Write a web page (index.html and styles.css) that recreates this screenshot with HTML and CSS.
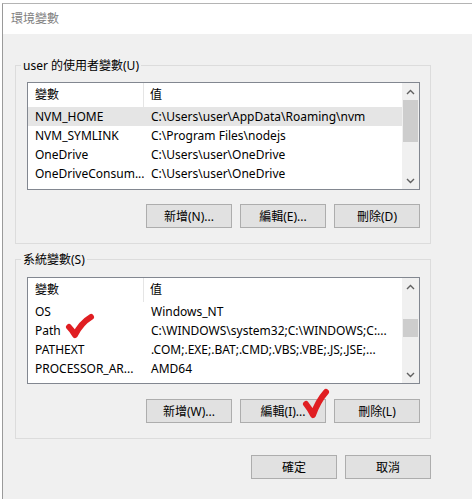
FILE: index.html
```html
<!DOCTYPE html>
<html lang="zh-Hant">
<head>
<meta charset="utf-8">
<title>環境變數</title>
<link rel="stylesheet" href="styles.css">
</head>
<body>
<div class="window">
  <div class="titlebar">環境變數</div>
  <div class="content">
    <fieldset class="group">
      <legend>user 的使用者變數(U)</legend>
      <div class="group-body">
        <div class="list">
          <div class="list-main">
            <div class="row head"><div class="c1">變數</div><div class="c2">值</div></div>
            <div class="row sel"><div class="c1">NVM_HOME</div><div class="c2">C:\Users\user\AppData\Roaming\nvm</div></div>
            <div class="row"><div class="c1">NVM_SYMLINK</div><div class="c2">C:\Program Files\nodejs</div></div>
            <div class="row"><div class="c1">OneDrive</div><div class="c2">C:\Users\user\OneDrive</div></div>
            <div class="row"><div class="c1">OneDriveConsum...</div><div class="c2">C:\Users\user\OneDrive</div></div>
          </div>
          <div class="scrollbar">
            <div class="arrow"><svg width="9" height="6" viewBox="0 0 9 6"><path d="M1 5 L4.5 1.5 L8 5" fill="none" stroke="#606060" stroke-width="1.4"/></svg></div>
            <div class="track"><div class="thumb thumb1"></div></div>
            <div class="arrow"><svg width="9" height="6" viewBox="0 0 9 6"><path d="M1 1 L4.5 4.5 L8 1" fill="none" stroke="#606060" stroke-width="1.4"/></svg></div>
          </div>
        </div>
        <div class="buttons">
          <button class="btn">新增(N)...</button>
          <button class="btn">編輯(E)...</button>
          <button class="btn">刪除(D)</button>
        </div>
      </div>
    </fieldset>

    <fieldset class="group group2">
      <legend>系統變數(S)</legend>
      <div class="group-body">
        <div class="list">
          <div class="list-main">
            <div class="row head"><div class="c1">變數</div><div class="c2">值</div></div>
            <div class="row"><div class="c1">OS</div><div class="c2">Windows_NT</div></div>
            <div class="row"><div class="c1">Path</div><div class="c2">C:\WINDOWS\system32;C:\WINDOWS;C:...</div></div>
            <div class="row"><div class="c1">PATHEXT</div><div class="c2">.COM;.EXE;.BAT;.CMD;.VBS;.VBE;.JS;.JSE;...</div></div>
            <div class="row"><div class="c1">PROCESSOR_AR...</div><div class="c2">AMD64</div></div>
          </div>
          <div class="scrollbar">
            <div class="arrow"><svg width="9" height="6" viewBox="0 0 9 6"><path d="M1 5 L4.5 1.5 L8 5" fill="none" stroke="#606060" stroke-width="1.4"/></svg></div>
            <div class="track"><div class="thumb thumb2"></div></div>
            <div class="arrow"><svg width="9" height="6" viewBox="0 0 9 6"><path d="M1 1 L4.5 4.5 L8 1" fill="none" stroke="#606060" stroke-width="1.4"/></svg></div>
          </div>
        </div>
        <div class="buttons">
          <button class="btn">新增(W)...</button>
          <button class="btn">編輯(I)...</button>
          <button class="btn">刪除(L)</button>
        </div>
      </div>
    </fieldset>

    <div class="footer">
      <button class="btn">確定</button>
      <button class="btn">取消</button>
    </div>
  </div>
</div>

<svg class="check check1" width="30" height="28" viewBox="0 0 30 28"><path d="M4 14 Q7 17 10 22 Q16 10 26 4" fill="none" stroke="#e01e22" stroke-width="6" stroke-linecap="round" stroke-linejoin="round"/></svg>
<svg class="check check2" width="30" height="32" viewBox="0 0 30 32"><path d="M5 17 Q9 22 12 28 Q17 14 25 5" fill="none" stroke="#e01e22" stroke-width="6" stroke-linecap="round" stroke-linejoin="round"/></svg>
</body>
</html>
```

FILE: styles.css
```css
* { box-sizing: border-box; }

html, body {
  margin: 0;
  padding: 0;
  background: #ffffff;
  width: 472px;
  height: 499px;
  overflow: hidden;
}

body {
  position: relative;
  font-family: "Noto Sans", "Noto Sans CJK TC", sans-serif;
  font-size: 12px;
  color: #000;
}

.window {
  margin: 3px 0 0 2px;
  width: 470px;
  height: 496px;
  border-left: 1px solid #9a9a9a;
  border-top: 1px solid #b4b4b4;
  background: #f0f0f0;
  overflow: hidden;
}

.titlebar {
  height: 30px;
  background: #ffffff;
  color: #808080;
  font-size: 12px;
  line-height: 30px;
  padding-left: 8px;
}

.content {
  padding: 22px 0 0 12px;
  width: 428px;
}

.group {
  margin: 0;
  padding: 0;
  border: 1px solid #dcdcdc;
  width: 416px;
  min-width: 0;
}

.group legend {
  padding: 2px 2px 0;
  margin-left: 5px;
  line-height: 16px;
  font-size: 12px;
}

.group-body {
  padding: 8px 10px 15px 11px;
}

.group2 {
  margin-top: 6px;
}

.group2 .group-body {
  padding-top: 9px;
}

.list {
  display: flex;
  height: 108px;
  border: 1px solid #828790;
  background: #ffffff;
}

.group2 .list {
  height: 107px;
}

.list-main {
  flex: 1;
  overflow: hidden;
}

.row {
  display: flex;
  height: 19px;
  line-height: 19px;
  white-space: nowrap;
}

.row.head {
  height: 24px;
  line-height: 23px;
}

.row.sel {
  background: #e5e5e5;
}

.c1 {
  width: 116px;
  flex: none;
  padding-left: 7px;
  overflow: hidden;
}

.c2 {
  flex: 1;
  padding-left: 7px;
  overflow: hidden;
}

.head .c1 {
  border-right: 1px solid #e5e5e5;
}

.head .c2 {
  padding-left: 6px;
}

.scrollbar {
  width: 17px;
  flex: none;
  display: flex;
  flex-direction: column;
  background: #f0f0f0;
}

.arrow {
  height: 17px;
  flex: none;
  display: flex;
  align-items: center;
  justify-content: center;
}

.track {
  flex: 1;
  padding: 0 1px;
}

.thumb {
  background: #cdcdcd;
}

.thumb1 {
  height: 42px;
}

.thumb2 {
  margin-top: 24px;
  height: 18px;
}

.buttons {
  display: flex;
  justify-content: flex-end;
  gap: 8px;
  margin-top: 14px;
}

.group2 .buttons {
  margin-top: 15px;
}

.btn {
  width: 86px;
  height: 24px;
  padding: 0;
  margin: 0;
  border: 1px solid #adadad;
  background: #e1e1e1;
  font-family: "Noto Sans", "Noto Sans CJK TC", sans-serif;
  font-size: 12px;
  color: #000;
}

.footer {
  display: flex;
  justify-content: flex-end;
  gap: 8px;
  margin-top: 16px;
}

.check {
  position: absolute;
}

.check1 {
  left: 65px;
  top: 313px;
}

.check2 {
  left: 301px;
  top: 387px;
}
```
